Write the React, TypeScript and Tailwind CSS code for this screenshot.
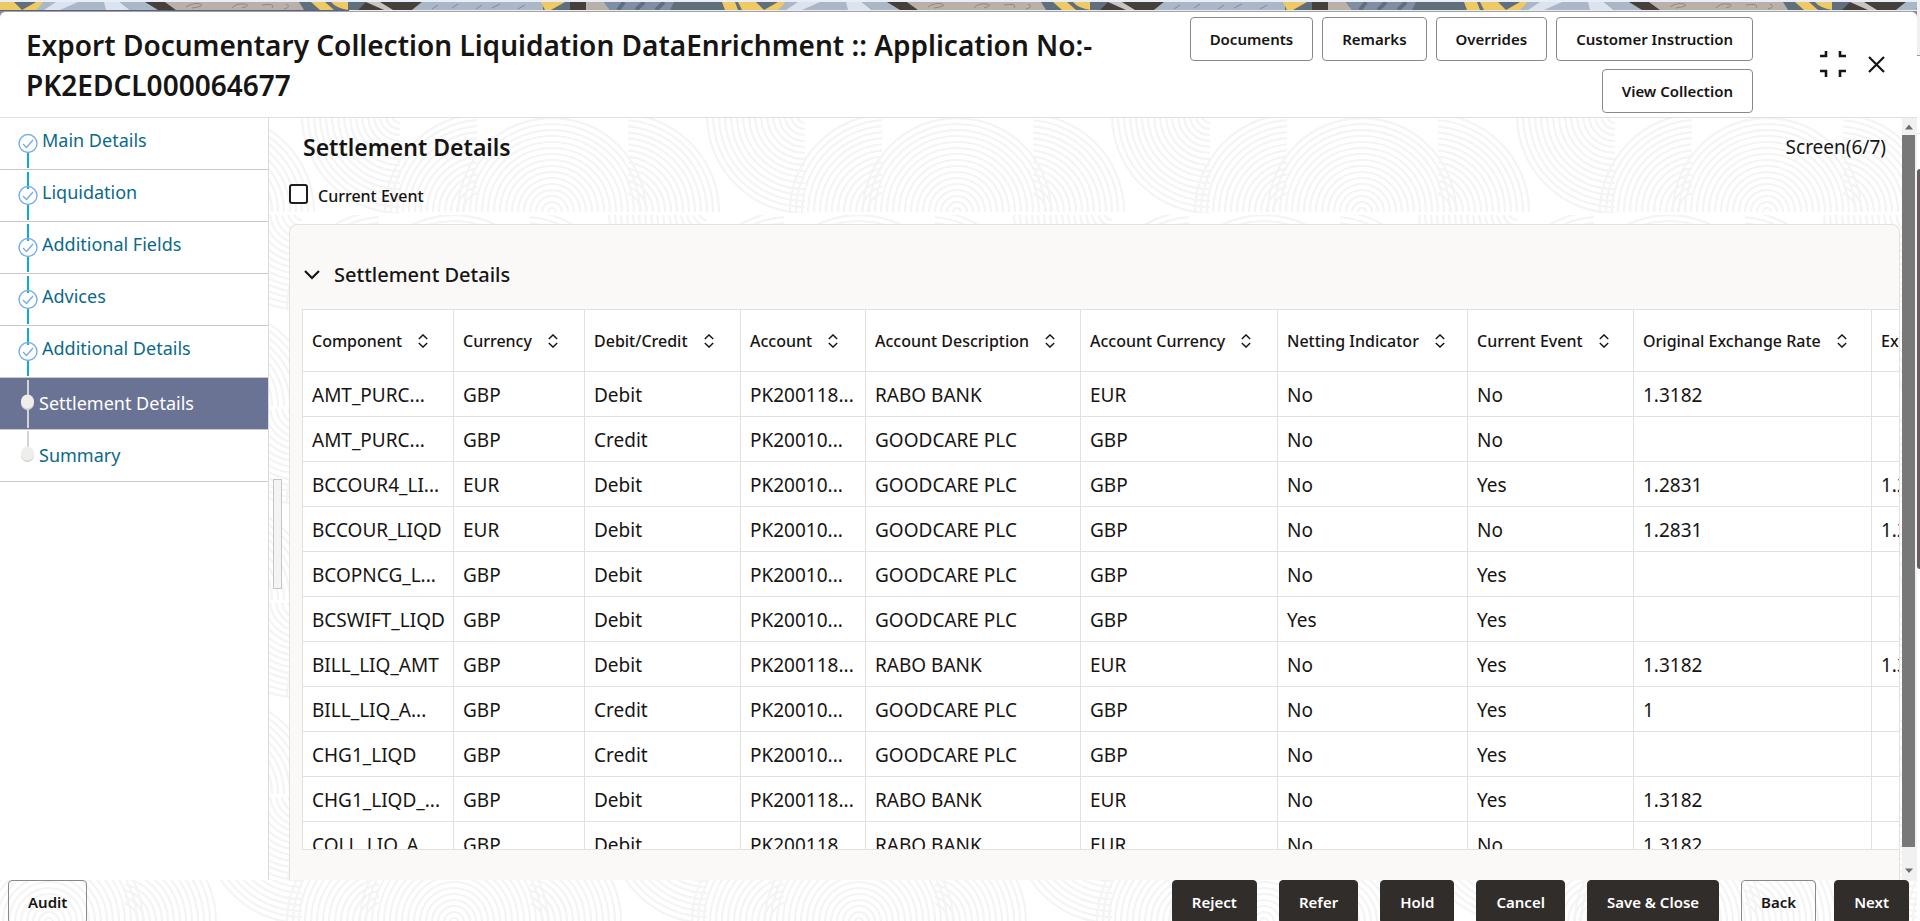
import React from "react";
import clsx from "clsx";

interface Step {
  label: string;
  state: "done" | "current" | "todo";
}

interface SettlementRow {
  component: string;
  currency: string;
  type: "Debit" | "Credit";
  account: string;
  description: string;
  accountCurrency: string;
  netting: string;
  currentEvent: string;
  originalRate?: string;
  rate?: string;
}

const steps: Step[] = [
  { label: "Main Details", state: "done" },
  { label: "Liquidation", state: "done" },
  { label: "Additional Fields", state: "done" },
  { label: "Advices", state: "done" },
  { label: "Additional Details", state: "done" },
  { label: "Settlement Details", state: "current" },
  { label: "Summary", state: "todo" },
];

const columns = [
  { label: "Component", width: "w-[151px]" },
  { label: "Currency", width: "w-[131px]" },
  { label: "Debit/Credit", width: "w-[156px]" },
  { label: "Account", width: "w-[125px]" },
  { label: "Account Description", width: "w-[215px]" },
  { label: "Account Currency", width: "w-[197px]" },
  { label: "Netting Indicator", width: "w-[190px]" },
  { label: "Current Event", width: "w-[166px]" },
  { label: "Original Exchange Rate", width: "w-[238px]" },
  { label: "Exchange Rate", width: "w-[200px]" },
];

const rabo = { account: "PK200118...", description: "RABO BANK", accountCurrency: "EUR" };
const goodcare = { account: "PK20010...", description: "GOODCARE PLC", accountCurrency: "GBP" };

const rows: SettlementRow[] = [
  { component: "AMT_PURC...", currency: "GBP", type: "Debit", ...rabo, netting: "No", currentEvent: "No", originalRate: "1.3182" },
  { component: "AMT_PURC...", currency: "GBP", type: "Credit", ...goodcare, netting: "No", currentEvent: "No" },
  { component: "BCCOUR4_LI...", currency: "EUR", type: "Debit", ...goodcare, netting: "No", currentEvent: "Yes", originalRate: "1.2831", rate: "1.2831" },
  { component: "BCCOUR_LIQD", currency: "EUR", type: "Debit", ...goodcare, netting: "No", currentEvent: "No", originalRate: "1.2831", rate: "1.2831" },
  { component: "BCOPNCG_L...", currency: "GBP", type: "Debit", ...goodcare, netting: "No", currentEvent: "Yes" },
  { component: "BCSWIFT_LIQD", currency: "GBP", type: "Debit", ...goodcare, netting: "Yes", currentEvent: "Yes" },
  { component: "BILL_LIQ_AMT", currency: "GBP", type: "Debit", ...rabo, netting: "No", currentEvent: "Yes", originalRate: "1.3182", rate: "1.3182" },
  { component: "BILL_LIQ_A...", currency: "GBP", type: "Credit", ...goodcare, netting: "No", currentEvent: "Yes", originalRate: "1" },
  { component: "CHG1_LIQD", currency: "GBP", type: "Credit", ...goodcare, netting: "No", currentEvent: "Yes" },
  { component: "CHG1_LIQD_...", currency: "GBP", type: "Debit", ...rabo, netting: "No", currentEvent: "Yes", originalRate: "1.3182" },
  { component: "COLL_LIQ_A...", currency: "GBP", type: "Debit", ...rabo, netting: "No", currentEvent: "No", originalRate: "1.3182" },
];

const headerActions = ["Documents", "Remarks", "Overrides", "Customer Instruction", "View Collection"];
const footerActions = ["Reject", "Refer", "Hold", "Cancel", "Save & Close"];

// concentric rings, 6px apart
const rings = (from: number, to: number) => {
  const out: number[] = [];
  for (let r = from; r <= to; r += 6) out.push(r);
  return out;
};

interface SwirlsProps {
  id: string;
  x: number;
  y: number;
}

const Swirls: React.FC<SwirlsProps> = ({ id, x, y }) => {
  const band = (
    <g>
      {rings(4, 94).map((r) => (
        <path key={`a${r}`} d={`M${203 - r} 94a${r} ${r} 0 0 1 ${2 * r} 0`} />
      ))}
      <g clipPath={`url(#${id}-left)`}>
        {rings(20, 98).map((r) => (
          <path key={`b${r}`} d={`M${134 - r} 94a${r} ${r} 0 0 1 ${2 * r} 0`} />
        ))}
      </g>
      <g clipPath={`url(#${id}-right)`}>
        {rings(20, 98).map((r) => (
          <path key={`c${r}`} d={`M${272 - r} 94a${r} ${r} 0 0 1 ${2 * r} 0`} />
        ))}
      </g>
      {rings(8, 98).map((r) => (
        <path key={`d${r}`} d={`M${51 - r} -3a${r} ${r} 0 0 0 ${r} ${r}`} />
      ))}
      {rings(8, 98).map((r) => (
        <path key={`e${r}`} d={`M${456 - r} -3a${r} ${r} 0 0 0 ${r} ${r}`} />
      ))}
    </g>
  );
  return (
    <svg className="absolute inset-0 h-full w-full" aria-hidden="true">
      <defs>
        <clipPath id={`${id}-left`}>
          <rect x="20" y="0" width="108" height="95" />
        </clipPath>
        <clipPath id={`${id}-right`}>
          <rect x="279" y="0" width="110" height="95" />
        </clipPath>
        <clipPath id={`${id}-band`}>
          <rect x="0" y="0" width="405" height="95" />
        </clipPath>
        <pattern id={id} x={x} y={y} width="405" height="194" patternUnits="userSpaceOnUse">
          <g fill="none" stroke="#f4f4f4" strokeWidth="2.200">
            <g clipPath={`url(#${id}-band)`}>{band}</g>
            <g transform="translate(-98 97)">
              <g clipPath={`url(#${id}-band)`}>{band}</g>
            </g>
            <g transform="translate(307 97)">
              <g clipPath={`url(#${id}-band)`}>{band}</g>
            </g>
          </g>
        </pattern>
      </defs>
      <rect width="100%" height="100%" fill="#fff" />
      <rect width="100%" height="100%" fill={`url(#${id})`} />
    </svg>
  );
};

const Banner: React.FC = () => (
  <svg className="block h-2 w-full shrink-0" aria-hidden="true">
    <defs>
      <pattern id="banner" width="742" height="8" patternUnits="userSpaceOnUse">
        <rect width="742" height="8" fill="#5f6f7b" />
        <path d="M0 0h14l8 8H0z" fill="#efc963" />
        <path d="M36 0h8l-6 8H22z" fill="#efc963" />
        <path d="M44 0h62l8 8H36z" fill="#a9b7c6" />
        <path d="M56 0h22L60 8H44z" fill="#dbe3ef" />
        <path d="M104 0h16l10 8h-24z" fill="#dbe3ef" />
        <path d="M120 0h26l14 8h-30z" fill="#a9b7c6" />
        <path d="M145 0h20l11 8h-18z" fill="#46403c" />
        <path d="M165 0h134l5 8H176z" fill="#b9b0aa" />
        <path d="M186 5q8-5 14-3t-8 4M232 6q4-5 12-4t-2 4M262 3q14-2 10 3M286 2q6 3-2 5" fill="none" stroke="#918882" strokeWidth="1" />
        <path d="M311 0h14l9 8h-14z" fill="#efc963" />
        <path d="M331 0h17v8q-12-2-17-8z" fill="#efc963" />
        <path d="M366 0h56l-10 8h-54z" fill="#46403c" />
        <path d="M366 0h14l13 8h-9z" fill="#c9c4c0" />
        <path d="M422 0h121v8H412z" fill="#a9b7c6" />
        <path d="M432 7l6-4M452 6l6-4M476 7l6-4M492 6l8-4M518 7l7-4" stroke="#7d8ca0" strokeWidth="1" />
        <path d="M541 0h24l-14 8h-6z" fill="#efc963" />
        <path d="M570 0h16v8h-16z" fill="#46403c" />
        <path d="M586 0h18l6 8h-24z" fill="#b9b0aa" />
        <path d="M604 0h70l-4 8H610z" fill="#7f8ea3" />
        <path d="M624 0l-6 8M644 0l-8 8M664 0l-8 8" stroke="#5f6f7b" strokeWidth="4" />
        <path d="M722 0h13l3 8h-13z" fill="#efc963" />
        <path d="M738 0h4v8z" fill="#efc963" />
      </pattern>
    </defs>
    <rect width="100%" height="8" fill="url(#banner)" />
  </svg>
);

const StepMarker: React.FC<{ state: Step["state"]; first: boolean }> = ({ state, first }) => {
  if (state === "done") {
    return (
      <svg className="h-[51px] w-5 shrink-0" viewBox="0 0 20 51" fill="none" aria-hidden="true">
        <path d={first ? "M10 35v15" : "M10 2v17M10 35v15"} stroke="#0ba9dd" strokeWidth="2" />
        <circle cx="10" cy="25.5" r="9" stroke="#74aee8" strokeWidth="1.4" />
        <path d="M5 26l3.5 3.5 6.500-7.500" stroke="#74aee8" strokeWidth="1.4" />
      </svg>
    );
  }
  return (
    <svg className="h-[51px] w-[17px] shrink-0" viewBox="0 0 17 51" fill="none" aria-hidden="true">
      <path d={state === "current" ? "M10 2v48" : "M10 1v18"} stroke="#d3d3d3" strokeWidth="2" />
      <ellipse cx="9.500" cy="25" rx="6.500" ry="7.200" fill="#d6d5d4" />
      <ellipse cx="9.500" cy="23.500" rx="6.500" ry="7" fill="#efeeed" />
    </svg>
  );
};

const SortIcon: React.FC = () => (
  <svg width="10" height="14" viewBox="0 0 10 14" fill="none" stroke="#161513" strokeWidth="1.4" aria-hidden="true">
    <path d="M0.800 5L5 0.900 9.200 5M0.800 9L5 13.100 9.200 9" />
  </svg>
);

interface ActionButtonProps {
  label: string;
  solid?: boolean;
}

const ActionButton: React.FC<ActionButtonProps> = ({ label, solid }) => (
  <button
    type="button"
    className={clsx(
      "h-11 shrink-0 rounded border px-[19px] text-[15px] font-semibold whitespace-nowrap",
      solid ? "border-[#312d2a] bg-[#312d2a] text-white" : "border-[#8b8986] text-[#161513]"
    )}
  >
    {label}
  </button>
);

const Sidebar: React.FC = () => (
  <nav className="w-[269px] shrink-0 border-r border-[#d3dde4] bg-white">
    {steps.map((step, i) => (
      <a
        key={step.label}
        href="#"
        className={clsx(
          "flex h-[52px] items-center border-b border-[#c9cac6] pl-[18px] text-lg",
          step.state === "current" ? "bg-[#6b7394] text-white" : "text-[#0a6a8a]"
        )}
      >
        <StepMarker state={step.state} first={i === 0} />
        <span className={step.state === "done" ? "pb-2 pl-1" : "pb-0.5 pl-1"}>{step.label}</span>
      </a>
    ))}
  </nav>
);

const SettlementTable: React.FC = () => (
  <table className="w-[1769px] table-fixed border-separate border-spacing-0 bg-white text-left">
    <thead>
      <tr className="h-[62px]">
        {columns.map((col) => (
          <th
            key={col.label}
            className={clsx("border-r border-b border-[#e1e1e1] pl-[9px] text-base font-medium whitespace-nowrap", col.width)}
          >
            <span className="flex items-center gap-4">
              {col.label}
              <SortIcon />
            </span>
          </th>
        ))}
      </tr>
    </thead>
    <tbody className="text-[19px]">
      {rows.map((row, i) => (
        <tr key={i} className="h-[45px]">
          {[
            row.component,
            row.currency,
            row.type,
            row.account,
            row.description,
            row.accountCurrency,
            row.netting,
            row.currentEvent,
            row.originalRate,
            row.rate,
          ].map((value, j) => (
            <td key={j} className="border-r border-b border-[#e1e1e1] pt-0.5 pl-[9px] leading-6 whitespace-nowrap">
              {value}
            </td>
          ))}
        </tr>
      ))}
    </tbody>
  </table>
);

export default function App() {
  return (
    <div className="flex h-screen overflow-hidden bg-white font-['Noto_Sans','Open_Sans',sans-serif] text-[#161513]">
      <div className="flex min-w-0 flex-1 flex-col">
        <div className="h-0.5 shrink-0 bg-[#e9edf8]" />
        <Banner />
        <div className="flex shrink-0 flex-col bg-[#8b8d96]">
          <div className="h-px w-full bg-[#ececec]">
            <div className="h-px w-[349px] bg-[#5c6087]" />
          </div>
          <header className="flex h-[107px] items-start rounded-t-md border-t border-b border-t-[#a3a3a3] border-b-[#e0e0e0] bg-white">
            <h1 className="min-w-0 flex-1 pt-[13px] pl-[26px] text-[28px] leading-10 font-semibold">
              Export Documentary Collection Liquidation DataEnrichment :: Application No:- PK2EDCL000064677
            </h1>
            <div className="flex w-[640px] flex-wrap justify-end gap-x-[9px] gap-y-2 pt-[5px]">
              {headerActions.map((label) => (
                <ActionButton key={label} label={label} />
              ))}
            </div>
            <div className="flex items-center gap-[22px] pt-[39px] pr-8 pl-[67px]">
              <button type="button" aria-label="Collapse">
                <svg className="block" width="26" height="26" viewBox="0 0 26 26" fill="none" stroke="#161513" strokeWidth="2.600" aria-hidden="true">
                  <path d="M0 5h6V0M26 5h-6V0M0 20h6v6M26 20h-6v6" />
                </svg>
              </button>
              <button type="button" aria-label="Close">
                <svg className="block" width="17" height="17" viewBox="0 0 17 17" fill="none" stroke="#161513" strokeWidth="2.200" aria-hidden="true">
                  <path d="M1 1l15 15M16 1L1 16" />
                </svg>
              </button>
            </div>
          </header>
        </div>

        <div className="flex min-h-0 flex-1">
          <Sidebar />
          <main className="relative flex min-w-0 flex-1 flex-col pr-0.5 pl-5">
            <Swirls id="swirls-main" x={80} y={0} />
            <div className="absolute top-[361px] left-1 h-[110px] w-[9px] border border-[#c6c6c6] bg-[#f4f4f4]" />
            <div className="relative flex items-center justify-between pt-[13px] pr-3.5 pl-3.5">
              <h2 className="text-[23px] leading-8 font-semibold">Settlement Details</h2>
              <span className="text-[19px] leading-8">Screen(6/7)</span>
            </div>
            <label className="relative mt-[21px] flex h-5 items-center gap-2.5 self-start text-base leading-5 font-medium">
              <input
                type="checkbox"
                className="h-5 w-[19px] appearance-none rounded-[3px] border-2 border-[#201e1c] bg-white"
              />
              <span className="pt-1">Current Event</span>
            </label>
            <section className="relative mt-5 flex min-h-0 flex-1 flex-col overflow-hidden rounded-t-lg border border-b-0 border-[#e4e2df] bg-[#faf9f8] pt-[34px] pb-[30px] pl-3">
              <button type="button" className="flex items-center gap-3.5 self-start pl-0.5 text-xl leading-8 font-medium">
                <svg width="16" height="10" viewBox="0 0 16 10" fill="none" stroke="#161513" strokeWidth="2.200" aria-hidden="true">
                  <path d="M1 1l7 7 7-7" />
                </svg>
                Settlement Details
              </button>
              <div className="mt-[18px] min-h-0 flex-1 overflow-hidden border border-r-0 border-[#e1e1e1]">
                <SettlementTable />
              </div>
            </section>
          </main>
          {/* content scrollbar */}
          <div className="flex w-[15px] shrink-0 flex-col bg-[#f1f1f1]">
            <svg className="h-[17px] w-full shrink-0" viewBox="0 0 15 17" fill="#6e6e6e" aria-hidden="true">
              <path d="M7 6.500l4 5H3z" />
            </svg>
            <div className="mr-0.5 flex-1 bg-[#787878]" />
            <div className="h-[33px] shrink-0">
              <svg className="h-full w-full" viewBox="0 0 15 33" fill="#6e6e6e" aria-hidden="true">
                <path d="M3 21.500h8l-4 4.500z" />
              </svg>
            </div>
          </div>
        </div>

        <footer className="relative flex h-[41px] shrink-0 items-start justify-between overflow-hidden pr-2 pl-2">
          <Swirls id="swirls-footer" x={-154} y={-52} />
          <div className="relative">
            <ActionButton label="Audit" />
          </div>
          <div className="relative flex gap-[22px]">
            {footerActions.map((label) => (
              <ActionButton key={label} label={label} solid />
            ))}
            <div className="flex gap-[18px]">
              <ActionButton label="Back" />
              <ActionButton label="Next" solid />
            </div>
          </div>
        </footer>
      </div>

      {/* page edge with the outer scrollbar */}
      <div className="flex w-[3px] shrink-0 flex-col">
        <div className="h-14 border-b border-[#9b9b9b] bg-[#f0f0f0]" />
        <div className="h-[78px] border-b border-[#dcdcdc]" />
        <div className="mt-[35px] h-[400px] rounded-l bg-[#665c5c]" />
      </div>
    </div>
  );
}
